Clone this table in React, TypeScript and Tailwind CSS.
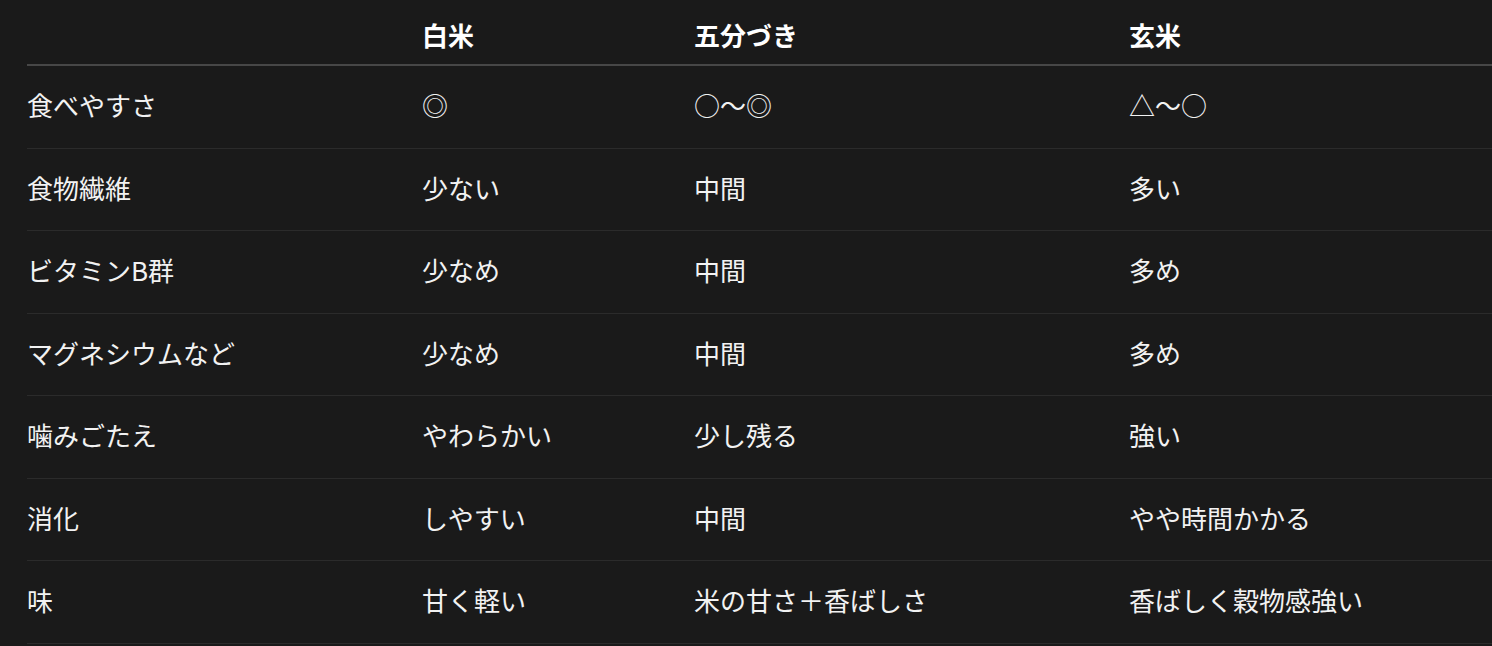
const rows: string[][] = [
  ['食べやすさ', '◎', '○〜◎', '△〜○'],
  ['食物繊維', '少ない', '中間', '多い'],
  ['ビタミンB群', '少なめ', '中間', '多め'],
  ['マグネシウムなど', '少なめ', '中間', '多め'],
  ['噛みごたえ', 'やわらかい', '少し残る', '強い'],
  ['消化', 'しやすい', '中間', 'やや時間かかる'],
  ['味', '甘く軽い', '米の甘さ＋香ばしさ', '香ばしく穀物感強い'],
];

const headers = ['', '白米', '五分づき', '玄米'];
const widths = ['w-[395px]', 'w-[272px]', 'w-[435px]', 'w-[420px]'];

export default function App() {
  return (
    <div
      className="min-h-screen w-full overflow-hidden bg-[#1a1a1a] pl-[27px] text-white"
      style={{ fontFamily: '"Noto Sans CJK JP", "Noto Sans", sans-serif' }}
    >
      <table className="w-[1522px] table-fixed border-collapse text-left text-[26px]">
        <colgroup>
          {widths.map((w, i) => (
            <col key={i} className={w} />
          ))}
        </colgroup>
        <thead>
          <tr className="border-b-2 border-[#474747]">
            {headers.map((h, i) => (
              <th key={i} className="pt-[15px] pb-[10px] font-bold leading-[39px]">
                {h}
              </th>
            ))}
          </tr>
        </thead>
        <tbody>
          {rows.map((r, i) => (
            <tr key={i} className="border-b border-[#2b2b2b]">
              {r.map((c, j) => (
                <td key={j} className="pt-[19.25px] pb-[23.25px] font-normal leading-[39px] text-[#f2f2f2]">
                  {c}
                </td>
              ))}
            </tr>
          ))}
        </tbody>
      </table>
    </div>
  );
}
